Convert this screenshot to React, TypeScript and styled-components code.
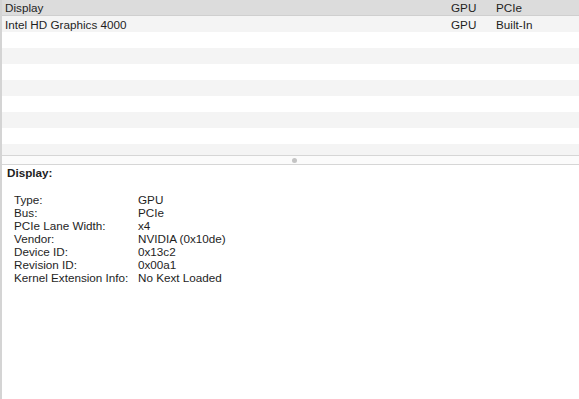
import styled, { createGlobalStyle } from "styled-components";

const GlobalStyle = createGlobalStyle`
  html, body {
    margin: 0;
    padding: 0;
    background: #ffffff;
  }
  body {
    font-family: "Liberation Sans", Arial, sans-serif;
    color: #1e1e1e;
  }
`;

type Device = { name: string; type: string; bus: string };

const devices: Device[] = [
  { name: "Intel HD Graphics 4000", type: "GPU", bus: "Built-In" },
];

const details: [string, string][] = [
  ["Type:", "GPU"],
  ["Bus:", "PCIe"],
  ["PCIe Lane Width:", "x4"],
  ["Vendor:", "NVIDIA (0x10de)"],
  ["Device ID:", "0x13c2"],
  ["Revision ID:", "0x00a1"],
  ["Kernel Extension Info:", "No Kext Loaded"],
];

const ROW_COUNT = 9;

function App() {
  const rows = Array.from({ length: ROW_COUNT }, (_, i) => devices[i]);

  return (
    <>
      <GlobalStyle />
      <Window>
        <ListPane>
          <HeaderRow>
            <NameCell>Display</NameCell>
            <TypeCell>GPU</TypeCell>
            <BusCell>PCIe</BusCell>
          </HeaderRow>
          {rows.map((d, i) => (
            <ListRow key={i} striped={i % 2 === 0}>
              <NameCell>{d?.name}</NameCell>
              <TypeCell>{d?.type}</TypeCell>
              <BusCell>{d?.bus}</BusCell>
            </ListRow>
          ))}
        </ListPane>
        <Splitter>
          <Grip />
        </Splitter>
        <DetailPane>
          <DetailTitle>Display:</DetailTitle>
          <DetailGrid>
            {details.map(([k, v]) => (
              <DetailLine key={k}>
                <DetailKey>{k}</DetailKey>
                <DetailValue>{v}</DetailValue>
              </DetailLine>
            ))}
          </DetailGrid>
        </DetailPane>
      </Window>
    </>
  );
}

const Window = styled.div`
  width: 579px;
  height: 399px;
  display: flex;
  flex-direction: column;
  border-left: 2px solid #d4d4d4;
  box-sizing: border-box;
  overflow: hidden;
  font-size: 11.7px;
`;

const ListPane = styled.div`
  height: 155px;
  display: flex;
  flex-direction: column;
  overflow: hidden;
`;

const HeaderRow = styled.div`
  display: flex;
  align-items: center;
  height: 16px;
  flex-shrink: 0;
  background: #dcdcdc;
  border-bottom: 1px solid #cfcfcf;
  box-sizing: border-box;
`;

const ListRow = styled.div<{ striped: boolean }>`
  display: flex;
  align-items: center;
  height: 16px;
  flex-shrink: 0;
  background: ${(p) => (p.striped ? "#f4f4f4" : "#ffffff")};
`;

const NameCell = styled.div`
  width: 446px;
  padding-left: 3px;
  white-space: nowrap;
`;

const TypeCell = styled.div`
  width: 45px;
`;

const BusCell = styled.div`
  flex: 1;
`;

const Splitter = styled.div`
  height: 10px;
  flex-shrink: 0;
  display: flex;
  align-items: center;
  justify-content: center;
  padding-left: 8px;
  background: #fbfbfb;
  border-top: 1px solid #d6d6d6;
  border-bottom: 1px solid #d6d6d6;
  box-sizing: border-box;
`;

const Grip = styled.div`
  width: 5px;
  height: 5px;
  border-radius: 50%;
  background: #c4c4c4;
`;

const DetailPane = styled.div`
  flex: 1;
  padding: 1px 0 0 5px;
`;

const DetailTitle = styled.div`
  font-weight: 700;
  height: 13px;
  line-height: 13px;
`;

const DetailGrid = styled.div`
  margin-top: 14px;
  padding-left: 7px;
  display: flex;
  flex-direction: column;
`;

const DetailLine = styled.div`
  display: flex;
  height: 13px;
  line-height: 13px;
`;

const DetailKey = styled.div`
  width: 124px;
`;

const DetailValue = styled.div``;

export default App;
